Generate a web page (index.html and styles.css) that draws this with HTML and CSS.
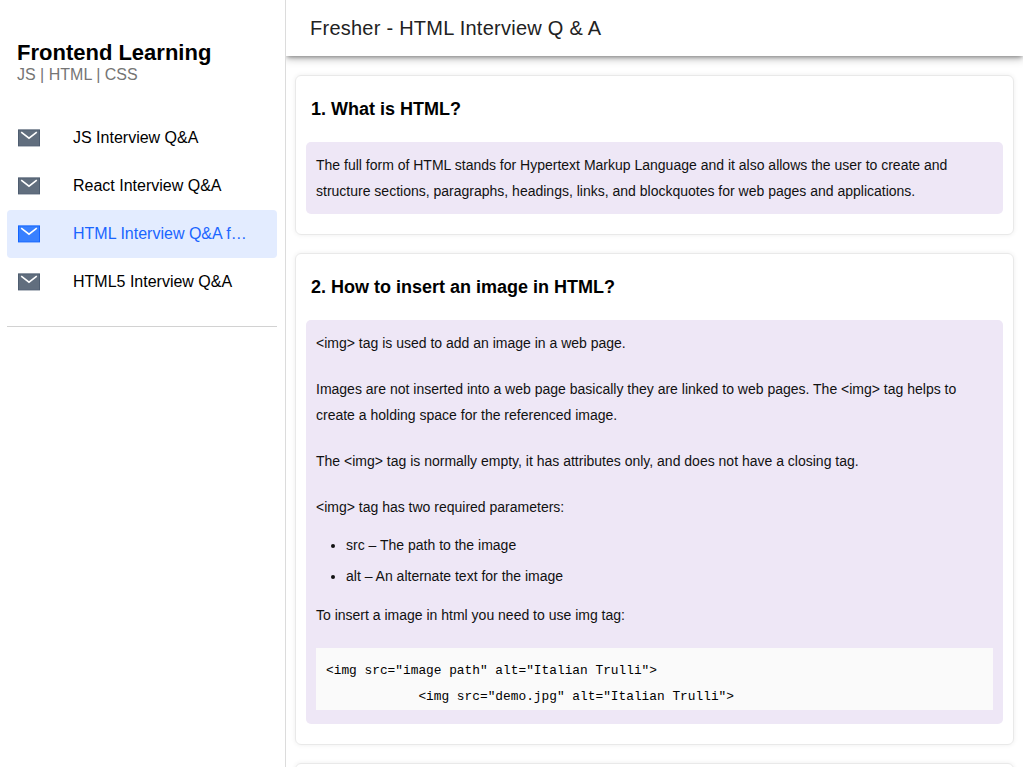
FILE: index.html
```
<!DOCTYPE html>
<html lang="en">
<head>
    <meta charset="UTF-8">
    <title>Frontend Learning</title>
    <meta name="viewport" content="width=device-width, initial-scale=1.0">
    <link rel="stylesheet" href="styles.css">
</head>
<body>
    <!-- Side Menu -->
    <aside class="menu">
        <h1 class="menu-title">Frontend Learning</h1>
        <p class="menu-note">JS | HTML | CSS</p>
        <ul class="menu-list">
            <li>
                <a href="#" class="menu-item">
                    <svg class="icon" viewBox="0 0 24 20"><rect class="icon-box" x="1.5" y="1.9" width="21" height="16"/><path class="icon-flap" d="M4.2 4.2l7.8 6 7.8-6"/></svg>
                    <span>JS Interview Q&amp;A</span>
                </a>
            </li>
            <li>
                <a href="#" class="menu-item">
                    <svg class="icon" viewBox="0 0 24 20"><rect class="icon-box" x="1.5" y="1.9" width="21" height="16"/><path class="icon-flap" d="M4.2 4.2l7.8 6 7.8-6"/></svg>
                    <span>React Interview Q&amp;A</span>
                </a>
            </li>
            <li>
                <a href="#" class="menu-item selected">
                    <svg class="icon" viewBox="0 0 24 20"><rect class="icon-box" x="1.5" y="1.9" width="21" height="16"/><path class="icon-flap" d="M4.2 4.2l7.8 6 7.8-6"/></svg>
                    <span>HTML Interview Q&amp;A f…</span>
                </a>
            </li>
            <li>
                <a href="#" class="menu-item">
                    <svg class="icon" viewBox="0 0 24 20"><rect class="icon-box" x="1.5" y="1.9" width="21" height="16"/><path class="icon-flap" d="M4.2 4.2l7.8 6 7.8-6"/></svg>
                    <span>HTML5 Interview Q&amp;A</span>
                </a>
            </li>
        </ul>
    </aside>

    <!-- Page -->
    <div class="page">
        <header class="toolbar">Fresher - HTML Interview Q &amp; A</header>
        <main class="content">
            <section class="card">
                <h2>1. What is HTML?</h2>
                <div class="answer">
                    <p>The full form of HTML stands for Hypertext Markup Language and it also allows the user to create and structure sections, paragraphs, headings, links, and blockquotes for web pages and applications.</p>
                </div>
            </section>

            <section class="card">
                <h2>2. How to insert an image in HTML?</h2>
                <div class="answer">
                    <p>&lt;img&gt; tag is used to add an image in a web page.</p>
                    <p>Images are not inserted into a web page basically they are linked to web pages. The &lt;img&gt; tag helps to create a holding space for the referenced image.</p>
                    <p>The &lt;img&gt; tag is normally empty, it has attributes only, and does not have a closing tag.</p>
                    <p>&lt;img&gt; tag has two required parameters:</p>
                    <ul>
                        <li>src – The path to the image</li>
                        <li>alt – An alternate text for the image</li>
                    </ul>
                    <p>To insert a image in html you need to use img tag:</p>
                    <pre>&lt;img src="image path" alt="Italian Trulli"&gt;
            &lt;img src="demo.jpg" alt="Italian Trulli"&gt;</pre>
                </div>
            </section>

            <section class="card next"></section>
        </main>
    </div>
</body>
</html>
```
FILE: styles.css
```
* {
    box-sizing: border-box;
    margin: 0;
    padding: 0;
}

body {
    display: flex;
    height: 100vh;
    overflow: hidden;
    font-family: Arial, "Liberation Sans", sans-serif;
    background-color: #fff;
    color: #000;
}

/* Side Menu */
.menu {
    flex: none;
    width: 286px;
    padding: 40px 8px 0 7px;
    border-right: 1px solid #dcdcdc;
}

.menu-title {
    padding-left: 10px;
    font-size: 22px;
    line-height: 26px;
}

.menu-note {
    padding-left: 10px;
    font-size: 16px;
    line-height: 18px;
    color: #757575;
}

.menu-list {
    margin-top: 30px;
    padding-bottom: 20px;
    border-bottom: 1px solid #d2d2d2;
    list-style: none;
}

.menu-item {
    display: flex;
    align-items: center;
    gap: 32px;
    height: 48px;
    padding: 0 30px 0 10px;
    border-radius: 4px;
    color: #000;
    font-size: 16px;
    text-decoration: none;
}

.menu-item span {
    white-space: nowrap;
}

.icon {
    flex: none;
    width: 24px;
    height: 20px;
}

.icon-box {
    fill: #616e7e;
    stroke: #4e5d70;
    stroke-width: 1;
}

.icon-flap {
    fill: none;
    stroke: #fff;
    stroke-width: 1.6;
}

.menu-item.selected {
    background-color: #e3ecff;
    color: #1a65ff;
}

.selected .icon-box {
    fill: #3880ff;
    stroke: #1264ff;
}

/* Page */
.page {
    flex: 1;
    display: flex;
    flex-direction: column;
    min-width: 0;
    overflow: hidden;
}

.toolbar {
    flex: none;
    height: 56px;
    padding-left: 24px;
    font-size: 20px;
    line-height: 56px;
    letter-spacing: 0.25px;
    color: #222;
    box-shadow: 0 2px 4px -1px rgba(0, 0, 0, 0.35), 0 3px 8px rgba(0, 0, 0, 0.25);
}

.content {
    flex: 1;
    min-height: 0;
    padding: 19px 9px 0;
    overflow: hidden;
}

.card {
    margin-bottom: 18px;
    padding: 0 10px 20px;
    border: 1px solid #e9e9e9;
    border-radius: 6px;
    box-shadow: 0 0 5px rgba(0, 0, 0, 0.07);
}

.card.next {
    height: 200px;
}

.card h2 {
    padding: 20px 5px;
    font-size: 18px;
    line-height: 26px;
}

.answer {
    padding: 10px;
    border-radius: 5px;
    background-color: #eee7f6;
    color: #111;
    font-size: 14px;
    line-height: 26px;
}

.answer p + p {
    margin-top: 20px;
}

.answer ul {
    margin: 12px 0 13px;
    padding-left: 30px;
}

.answer li + li {
    margin-top: 5px;
}

.answer pre {
    margin: 20px 0 4px;
    padding: 10px 10px 0;
    background-color: #fafafa;
    color: #000;
    font-family: Consolas, "Liberation Mono", monospace;
    font-size: 12.83px;
}
```
